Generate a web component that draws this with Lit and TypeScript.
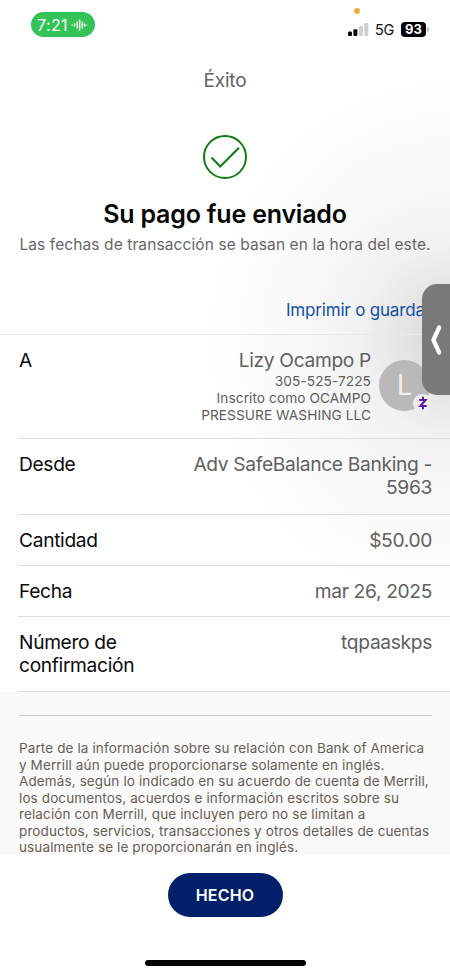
import { LitElement, html, css } from "lit";
import { customElement } from "lit/decorators.js";

@customElement("status-bar")
class StatusBar extends LitElement {
  static styles = css`
    :host { display: flex; justify-content: space-between; height: 50px; box-sizing: border-box; padding: 12px 21px 0 31px; position: relative; }
    .pill { width: 64px; height: 25px; border-radius: 13px; background: #33c357; color: #fff; display: flex; align-items: center; box-sizing: border-box; padding-left: 6px; gap: 3px; font-size: 16px; letter-spacing: 0.4px; }
    .dot { position: absolute; left: 354px; top: 8px; width: 6px; height: 6px; border-radius: 50%; background: #ecae45; }
    .right { display: flex; align-items: center; height: 34px; }
    .net { font-size: 14.5px; color: #111; margin: 0 7px 0 6px; letter-spacing: -0.3px; width: 19px; }
    .bat { width: 25px; height: 15px; border-radius: 4px; background: #000; color: #fff; font-size: 13px; font-weight: 700; line-height: 15px; text-align: center; }
    .tip { width: 2px; height: 5px; border-radius: 0 2px 2px 0; background: #bbb; margin-left: 1px; }
  `;
  render() {
    return html`
      <div class="pill"><span>7:21</span>
        <svg width="16" height="14" viewBox="0 0 16 14" fill="none" stroke="#fff" stroke-width="1.3" stroke-linecap="round">
          <path d="M1.2 6.8v.4M3.7 6v2M6.2 4v6M8.7 2v10M11.2 4v6M13.4 6v2M15.2 6.8v.4" />
        </svg>
      </div>
      <span class="dot"></span>
      <div class="right">
        <svg width="21" height="13" viewBox="0 0 21 13">
          <rect x="0" y="8.5" width="4" height="4.5" rx="1.2" fill="#000" />
          <rect x="5.4" y="6.2" width="4" height="6.8" rx="1.2" fill="#000" />
          <rect x="11" y="3" width="4" height="10" rx="1" fill="#cfcfcf" />
          <rect x="16.3" y="0" width="4" height="13" rx="1" fill="#cfcfcf" />
        </svg>
        <span class="net">5G</span><span class="bat">93</span><span class="tip"></span>
      </div>`;
  }
}

@customElement("detail-row")
class DetailRow extends LitElement {
  static properties = { label: {} };
  declare label: string;
  static styles = css`
    :host { display: flex; justify-content: space-between; box-sizing: border-box; margin-left: 18px; padding: 14.4px 18px 0 1px; border-bottom: 1px solid #dedede; font-size: 19.2px; line-height: 23px; letter-spacing: -0.33px; }
    .label { color: #0c0c0c; white-space: pre-line; }
    .value { color: #606060; text-align: right; }
  `;
  render() {
    return html`<div class="label">${this.label}</div><div class="value"><slot></slot></div>`;
  }
}

const legal = [
  "Parte de la información sobre su relación con Bank of America",
  "y Merrill aún puede proporcionarse solamente en inglés.",
  "Además, según lo indicado en su acuerdo de cuenta de Merrill,",
  "los documentos, acuerdos e información escritos sobre su",
  "relación con Merrill, que incluyen pero no se limitan a",
  "productos, servicios, transacciones y otros detalles de cuentas",
  "usualmente se le proporcionarán en inglés.",
];

@customElement("app-root")
class AppRoot extends LitElement {
  static styles = css`
    :host { display: flex; flex-direction: column; position: relative; isolation: isolate; width: 450px; height: 975px; overflow: hidden; background: #fefefe; font-family: Inter, "Liberation Sans", sans-serif; white-space: nowrap; }
    .shade { position: absolute; z-index: -1; right: 0; top: 60px; width: 300px; height: 560px; background: radial-gradient(ellipse 250px 270px at 300px 280px, rgba(0,0,0,.17) 0, rgba(0,0,0,.1) 18%, rgba(0,0,0,.05) 36%, rgba(0,0,0,.022) 58%, rgba(0,0,0,.009) 80%, transparent 100%); pointer-events: none; }
    .top { height: 284px; display: flex; flex-direction: column; align-items: center; }
    .title { margin-top: 19px; font-size: 19px; line-height: 24px; color: #636363; letter-spacing: -0.2px; }
    .check { margin-top: 41px; }
    h1 { margin: 17px 0 0; font-size: 25px; line-height: 34px; font-weight: 600; color: #060606; letter-spacing: -0.2px; }
    .sub { margin-top: 4px; font-size: 15.5px; line-height: 20px; color: #666; letter-spacing: 0.1px; }
    .link { height: 24px; margin-top: auto; padding: 0 19px 12px 0; align-self: flex-end; font-size: 17px; line-height: 24px; color: #1450a0; letter-spacing: -0.18px; }
    .rows { border-top: 1px solid #e9e9e9; }
    .to { height: 104px; padding-right: 20px; }
    .from { height: 76px; }
    .one { height: 51px; }
    .conf { height: 75px; }
    .person { display: flex; gap: 8px; }
    .small { font-size: 13.7px; line-height: 16.5px; letter-spacing: 0.06px; }
    .phone { line-height: 18px; }
    .avatar { position: relative; width: 51px; height: 51px; margin-top: 10.6px; border-radius: 50%; background: #b9b9b9; color: #eee; font-size: 28px; line-height: 51px; text-align: center; }
    .badge { position: absolute; left: 34px; top: 34px; width: 19px; height: 19px; border-radius: 50%; background: #ededed; display: flex; align-items: center; justify-content: center; }
    .legal { margin-top: 0; height: 163px; box-sizing: border-box; padding: 23px 18px 0 19px; background: #f9f9f9; color: #666057; font-size: 13.5px; line-height: 16.5px; letter-spacing: 0.12px; }
    .rule { height: 1px; background: #cbcbcb; margin-bottom: 24px; }
    .bottom { flex: 1; display: flex; flex-direction: column; align-items: center; }
    button { margin: 18px 0 0; width: 115px; height: 44px; border: 0; border-radius: 22px; background: #02206a; color: #fff; font: 600 16px Inter, sans-serif; letter-spacing: 0.2px; padding: 0; }
    .home { width: 161px; height: 6px; border-radius: 3px; background: #000; margin-top: 43px; }
    .tab { position: absolute; left: 422px; top: 284px; width: 28px; height: 111px; border-radius: 15px 0 0 15px; background: #797979; }
  `;
  render() {
    return html`
      <div class="shade"></div>
      <status-bar></status-bar>
      <div class="top">
        <div class="title">Éxito</div>
        <svg class="check" width="46" height="46" viewBox="0 0 46 46" fill="none" stroke="#127c16">
          <circle cx="23" cy="23" r="21" stroke-width="2" />
          <path d="M9.5 23.5l8.7 9L37 13.7" stroke-width="2.1" />
        </svg>
        <h1>Su pago fue enviado</h1>
        <div class="sub">Las fechas de transacción se basan en la hora del este.</div>
        <div class="link">Imprimir o guardar</div>
      </div>
      <div class="rows">
        <detail-row class="to" label="A">
          <div class="person">
            <div>
              <div class="name">Lizy Ocampo P</div>
              <div class="small phone">305-525-7225</div>
              <div class="small">Inscrito como OCAMPO<br />PRESSURE WASHING LLC</div>
            </div>
            <div class="avatar">L
              <span class="badge"><svg width="10" height="14" viewBox="0 0 10 14" fill="none" stroke="#5a1bab" stroke-width="2"><path d="M1.2 4H7.6L2.4 10H8.8M5 .8V4M5 10v3.2" /></svg></span>
            </div>
          </div>
        </detail-row>
        <detail-row class="from" label="Desde">Adv SafeBalance Banking -<br />5963</detail-row>
        <detail-row class="one" label="Cantidad">$50.00</detail-row>
        <detail-row class="one" label="Fecha">mar 26, 2025</detail-row>
        <detail-row class="conf" label=${"Número de\nconfirmación"}>tqpaaskps</detail-row>
      </div>
      <div class="legal">
        <div class="rule"></div>
        ${legal.map((l) => html`<div>${l}</div>`)}
      </div>
      <div class="bottom">
        <button>HECHO</button>
        <div class="home"></div>
      </div>
      <div class="tab">
        <svg width="28" height="111" viewBox="0 0 28 111" fill="none" stroke="#fff" stroke-width="4.2" stroke-linecap="round" stroke-linejoin="round"><path d="M17.2 43.5L11.4 56L17.2 68.5" /></svg>
      </div>`;
  }
}
